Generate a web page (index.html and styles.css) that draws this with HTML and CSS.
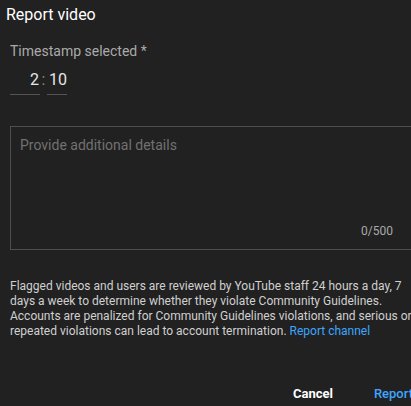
FILE: index.html
```html
<!DOCTYPE html>
<html lang="en">
<head>
<meta charset="utf-8">
<link rel="stylesheet" href="styles.css">
</head>
<body>
<div class="dialog">
  <h1 class="title">Report video</h1>
  <div class="content">
    <div class="label">Timestamp selected *</div>
    <div class="time">
      <span class="field min">2</span>
      <span class="colon">:</span>
      <span class="field sec">10</span>
    </div>
    <div class="details">
      <div class="placeholder">Provide additional details</div>
      <div class="counter">0/500</div>
    </div>
    <p class="notice">Flagged videos and users are reviewed by YouTube staff 24 hours a day, 7 days a week to determine whether they violate Community Guidelines. Accounts are penalized for Community Guidelines violations, and serious or repeated violations can lead to account termination. <a class="link">Report channel</a></p>
    <div class="actions">
      <button class="btn cancel">Cancel</button>
      <button class="btn report">Report</button>
    </div>
  </div>
</div>
</body>
</html>
```

FILE: styles.css
```css
html, body {
  margin: 0;
  padding: 0;
  background: #212121;
  overflow: hidden;
}
body {
  width: 411px;
  height: 406px;
  font-family: Roboto, "Liberation Sans", sans-serif;
  color: #fff;
}
.dialog {
  width: 440px;
}
.title {
  margin: 0;
  padding: 3px 0 0 6px;
  font-size: 16px;
  font-weight: 400;
  line-height: 24px;
  color: #fff;
}
.content {
  padding: 15px 0 0 10px;
  width: 420px;
}
.label {
  font-size: 14px;
  line-height: 18px;
  color: #aaa;
}
.time {
  display: flex;
  align-items: flex-end;
  margin-top: 9px;
  height: 26px;
}
.field {
  font-size: 16px;
  line-height: 22px;
  color: #e6e6e6;
  border-bottom: 1px solid #555;
  text-align: right;
  padding-bottom: 3px;
  box-sizing: border-box;
}
.min { width: 30px; padding-right: 1px; }
.sec { width: 20px; text-align: left; padding-left: 2px; }
.colon {
  width: 7px;
  font-size: 16px;
  line-height: 22px;
  color: #888;
  text-align: center;
  padding-bottom: 4px;
}
.details {
  margin-top: 31px;
  height: 124px;
  border: 1px solid #4d4d4d;
  box-sizing: border-box;
  display: flex;
  flex-direction: column;
  justify-content: space-between;
  padding: 9px 0 10px 9px;
}
.placeholder {
  font-size: 14px;
  line-height: 18px;
  color: #717171;
}
.counter {
  align-self: flex-start;
  margin-left: 341px;
  font-size: 12px;
  line-height: 16px;
  color: #aaa;
}
.notice {
  width: 408px;
  margin: 29px 0 0;
  font-size: 12px;
  line-height: 15px;
  color: #d0d0d0;
}
.link {
  color: #3ea6ff;
  text-decoration: none;
}
.actions {
  display: flex;
  justify-content: flex-end;
  gap: 8px;
  margin-top: 46px;
}
.btn {
  background: none;
  border: 0;
  padding: 0 17px 0 16px;
  font-family: Roboto, "Liberation Sans", sans-serif;
  font-size: 13px;
  line-height: 18px;
  font-weight: 700;
}
.cancel { color: #fff; }
.report { color: #3ea6ff; font-weight: 500; }
```
